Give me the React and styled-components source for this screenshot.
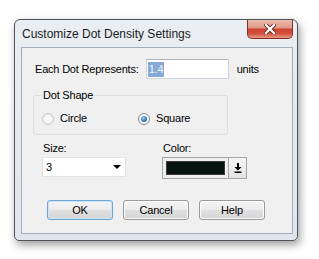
import styled, { createGlobalStyle } from "styled-components"

const Global = createGlobalStyle`
body{
    margin: 0;
    background: #ffffff;
    font-family: "Liberation Sans", Arial, sans-serif;
}
`

const Page = styled.div`
padding: 19px 0 0 14px;
width: 319px;
height: 259px;
box-sizing: border-box;
`

const Window = styled.div`
width: 284px;
height: 222px;
box-sizing: border-box;
border: 1px solid #4e545a;
border-radius: 6px 6px 5px 5px;
background: linear-gradient(#e9eef3, #dfe6ed);
box-shadow: 2px 4px 9px rgba(0,0,0,0.38);
display: flex;
flex-direction: column;
`

const TitleBar = styled.div`
height: 27px;
display: flex;
align-items: center;
padding-left: 7px;
`

const Title = styled.span`
flex: 1;
font-size: 12px;
color: #1b1b1b;
`

const CloseButton = styled.div`
align-self: flex-start;
width: 46px;
height: 19px;
margin-right: 4px;
box-sizing: border-box;
border: 1px solid #8a2e22;
border-top: none;
border-radius: 0 0 5px 5px;
background: linear-gradient(#ecbcb1 0%, #e19a8a 42%, #cf4431 52%, #d2503c 75%, #e59a86 100%);
display: flex;
align-items: center;
justify-content: center;
`

const Client = styled.div`
flex: 1;
margin: 0 4px 6px 6px;
border: 1px solid #a3aebb;
background: #f0f0f0;
padding: 11px 0 0 0;
font-size: 11px;
letter-spacing: -0.2px;
color: #000;
`

const Row = styled.div`
display: flex;
align-items: center;
padding-left: ${p => p.indent || 0}px;
`

const Label = styled.span`
line-height: 13px;
`

const TextBox = styled.div`
width: 83px;
height: 20px;
box-sizing: border-box;
margin-left: 7px;
border: 1px solid #cdd4dc;
border-top-color: #abb2ba;
background: #fff;
display: flex;
align-items: center;
padding-left: 1px;
`

const Selected = styled.span`
background: #86a8d6;
color: #f4f7fb;
padding: 1px 1px;
line-height: 13px;
`

const Units = styled.span`
margin-left: 8px;
`

const Group = styled.fieldset`
margin: 10px 0 0 11px;
width: 195px;
box-sizing: border-box;
border: 1px solid #d9dee3;
border-radius: 3px;
padding: 0 0 9px 7px;
`

const Legend = styled.legend`
padding: 0 2px;
line-height: 13px;
`

const RadioRow = styled.div`
display: grid;
grid-template-columns: 96px 1fr;
margin: 10px 0 0 1px;
`

const RadioOption = styled.label`
display: flex;
align-items: center;
gap: 6px;
line-height: 13px;
`

const RadioCircle = styled.span`
width: 12px;
height: 12px;
box-sizing: border-box;
border-radius: 50%;
border: 1px solid ${p => p.$checked ? "#8a8d90" : "#c9cbcd"};
background: ${p => p.$checked ? "radial-gradient(circle, #ffffff 40%, #dfe3e7)" : "radial-gradient(circle, #f7f7f7 40%, #e6e6e6)"};
display: flex;
align-items: center;
justify-content: center;
`

const RadioDot = styled.span`
width: 6px;
height: 6px;
border-radius: 50%;
background: radial-gradient(circle at 40% 35%, #9fd3f5, #2a73b5 60%, #1a4f86);
`

const Fields = styled.div`
display: flex;
margin: 7px 0 0 20px;
`

const Field = styled.div`
width: ${p => p.width}px;
display: flex;
flex-direction: column;
gap: 2px;
`

const FieldLabel = styled.span`
line-height: 13px;
padding-left: 1px;
`

const Select = styled.div`
width: 84px;
height: 20px;
box-sizing: border-box;
border: 1px solid #e4e4e4;
background: #fff;
display: flex;
align-items: center;
justify-content: space-between;
padding: 0 4px 0 3px;
`

const Caret = styled.span`
width: 0;
height: 0;
border-left: 4px solid transparent;
border-right: 4px solid transparent;
border-top: 4px solid #000;
`

const ColorButton = styled.div`
width: 85px;
height: 22px;
box-sizing: border-box;
border: 1px solid #a5a5a5;
background: #eeeeee;
display: flex;
align-items: stretch;
`

const Swatch = styled.div`
flex: 1;
margin: 3px;
background: #06120e;
border: 1px solid #3c3c3c;
`

const ColorDrop = styled.div`
width: 17px;
border-left: 1px solid #a5a5a5;
background: linear-gradient(#f6f6f6, #e3e3e3);
display: flex;
align-items: center;
justify-content: center;
`

const Buttons = styled.div`
display: flex;
gap: 10px;
margin: 21px 0 0 25px;
`

const Button = styled.div`
width: 66px;
height: 20px;
box-sizing: border-box;
border: 1px solid ${p => p.$default ? "#6fa6d6" : "#9a9a9a"};
border-radius: 3px;
background: linear-gradient(#f4f4f4 0%, #ececec 48%, #dfdfdf 52%, #d6d6d6 100%);
box-shadow: inset 0 0 0 1px ${p => p.$default ? "#c8e6f7" : "#fbfbfb"};
display: flex;
align-items: center;
justify-content: center;
line-height: 13px;
`

function Radio({ checked, children }) {
    return (
        <RadioOption>
            <RadioCircle $checked={checked}>{checked && <RadioDot />}</RadioCircle>
            {children}
        </RadioOption>
    )
}

export default function App() {
    return (
        <Page>
            <Global />
            <Window>
                <TitleBar>
                    <Title>Customize Dot Density Settings</Title>
                    <CloseButton>
                        <svg width="12" height="10" viewBox="0 0 12 10">
                            <path d="M2 1 L10 9 M10 1 L2 9" stroke="#6b2a20" strokeWidth="4" strokeLinecap="square" />
                            <path d="M2 1 L10 9 M10 1 L2 9" stroke="#ffffff" strokeWidth="2.2" strokeLinecap="square" />
                        </svg>
                    </CloseButton>
                </TitleBar>
                <Client>
                    <Row indent={13}>
                        <Label>Each Dot Represents:</Label>
                        <TextBox><Selected>1.4</Selected></TextBox>
                        <Units>units</Units>
                    </Row>

                    <Group>
                        <Legend>Dot Shape</Legend>
                        <RadioRow>
                            <Radio>Circle</Radio>
                            <Radio checked>Square</Radio>
                        </RadioRow>
                    </Group>

                    <Fields>
                        <Field width={120}>
                            <FieldLabel>Size:</FieldLabel>
                            <Select>
                                <span>3</span>
                                <Caret />
                            </Select>
                        </Field>
                        <Field width={90}>
                            <FieldLabel>Color:</FieldLabel>
                            <ColorButton>
                                <Swatch />
                                <ColorDrop>
                                    <svg width="8" height="10" viewBox="0 0 8 10">
                                        <path d="M3 0 H5 V4 H7.5 L4 7.5 L0.5 4 H3 Z" fill="#000" />
                                        <rect x="0.5" y="8.5" width="7" height="1.5" fill="#000" />
                                    </svg>
                                </ColorDrop>
                            </ColorButton>
                        </Field>
                    </Fields>

                    <Buttons>
                        <Button $default>OK</Button>
                        <Button>Cancel</Button>
                        <Button>Help</Button>
                    </Buttons>
                </Client>
            </Window>
        </Page>
    )
}
